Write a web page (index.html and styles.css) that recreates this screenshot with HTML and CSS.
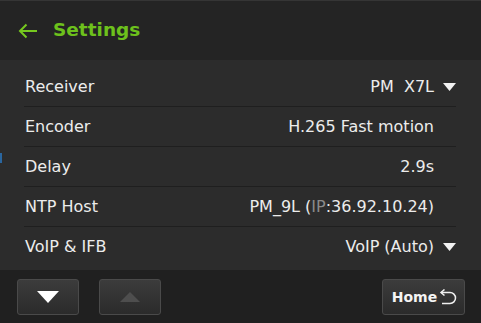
FILE: index.html
```
<!DOCTYPE html>
<html>
<head>
<meta charset="utf-8">
<link rel="stylesheet" href="styles.css">
</head>
<body>
<div class="app">
  <header class="header">
    <svg class="back" width="20" height="16" viewBox="0 0 20 16"><path d="M19 8 H2 M8.5 1.5 L2 8 L8.5 14.5" fill="none" stroke="#76c81f" stroke-width="2"/></svg>
    <h1 class="title">Settings</h1>
  </header>
  <main class="list">
    <div class="row"><span class="label">Receiver</span><span class="value">PM&nbsp;&nbsp;X7L</span><span class="caret"><svg width="13" height="8" viewBox="0 0 13 8"><path d="M0 0 H13 L6.5 8 Z" fill="#f2f2f2"/></svg></span></div>
    <div class="row"><span class="label">Encoder</span><span class="value">H.265 Fast motion</span><span class="caret"></span></div>
    <div class="row"><span class="label">Delay</span><span class="value">2.9s</span><span class="caret"></span></div>
    <div class="row"><span class="label">NTP Host</span><span class="value">PM_9L (<span class="dim">IP</span>:36.92.10.24)</span><span class="caret"></span></div>
    <div class="row"><span class="label">VoIP &amp; IFB</span><span class="value">VoIP (Auto)</span><span class="caret"><svg width="13" height="8" viewBox="0 0 13 8"><path d="M0 0 H13 L6.5 8 Z" fill="#f2f2f2"/></svg></span></div>
    <span class="edge-mark"></span>
  </main>
  <footer class="footer">
    <button class="btn arrow-btn"><svg width="22" height="12" viewBox="0 0 22 12"><path d="M0 0 H22 L11 12 Z" fill="#ffffff"/></svg></button>
    <button class="btn arrow-btn"><svg width="20" height="10" viewBox="0 0 20 10"><path d="M0 10 H20 L10 0 Z" fill="#4e4e4e"/></svg></button>
    <span class="spacer"></span>
    <button class="btn home-btn"><span>Home</span><svg width="20" height="17" viewBox="0 0 20 17"><path d="M3 3.5 H12 A5.5 5.5 0 0 1 12 14.5 H4" fill="none" stroke="#f0f0f0" stroke-width="1.5"/><path d="M6.5 0.5 L3 3.5 L6.5 6.5" fill="none" stroke="#f0f0f0" stroke-width="1.5"/></svg></button>
  </footer>
</div>
</body>
</html>
```
FILE: styles.css
```
html, body {
  margin: 0;
  padding: 0;
  background: #222222;
}
body {
  width: 481px;
  height: 323px;
  overflow: hidden;
  font-family: "DejaVu Sans", Verdana, sans-serif;
}
.app {
  display: flex;
  flex-direction: column;
  height: 323px;
}
.header {
  height: 59px;
  border-top: 1px solid #353535;
  background: #242424;
  display: flex;
  align-items: center;
  padding-left: 18px;
  gap: 15px;
}
.back {
  display: block;
}
.title {
  margin: 0;
  font-size: 18.5px;
  font-weight: bold;
  color: #6dc11c;
  line-height: 1;
}
.list {
  position: relative;
  height: 203px;
  padding: 7px 25px 0 24px;
  background: #2c2c2c;
  display: flex;
  flex-direction: column;
}
.row {
  height: 39px;
  border-bottom: 1px solid #1f1f1f;
  display: flex;
  align-items: center;
  padding-left: 1px;
  font-size: 16px;
  color: #ececec;
}
.row:last-of-type {
  border-bottom: none;
}
.label {
  flex: 1;
}
.value {
  text-align: right;
}
.dim {
  color: #8a8a8a;
}
.caret {
  width: 22px;
  display: flex;
  justify-content: flex-end;
}
.caret svg {
  display: block;
}
.edge-mark {
  position: absolute;
  left: 0;
  top: 93px;
  width: 2px;
  height: 10px;
  background: #2a7fd0;
  opacity: 0.7;
}
.footer {
  flex: 1;
  background: #202020;
  display: flex;
  align-items: flex-start;
  padding: 9px 16px 0 17px;
  gap: 20px;
}
.spacer {
  flex: 1;
}
.btn {
  height: 36px;
  border: 1px solid #4a4a4a;
  border-radius: 3px;
  background: linear-gradient(#3c3c3c, #2b2b2b);
  display: flex;
  align-items: center;
  justify-content: center;
  padding: 0;
  margin: 0;
}
.arrow-btn {
  width: 62px;
}
.home-btn {
  width: 83px;
  gap: 1px;
  font-family: "DejaVu Sans", Verdana, sans-serif;
  font-weight: bold;
  font-size: 14px;
  color: #f4f4f4;
  padding-left: 3px;
}
.home-btn svg {
  display: block;
}
```
